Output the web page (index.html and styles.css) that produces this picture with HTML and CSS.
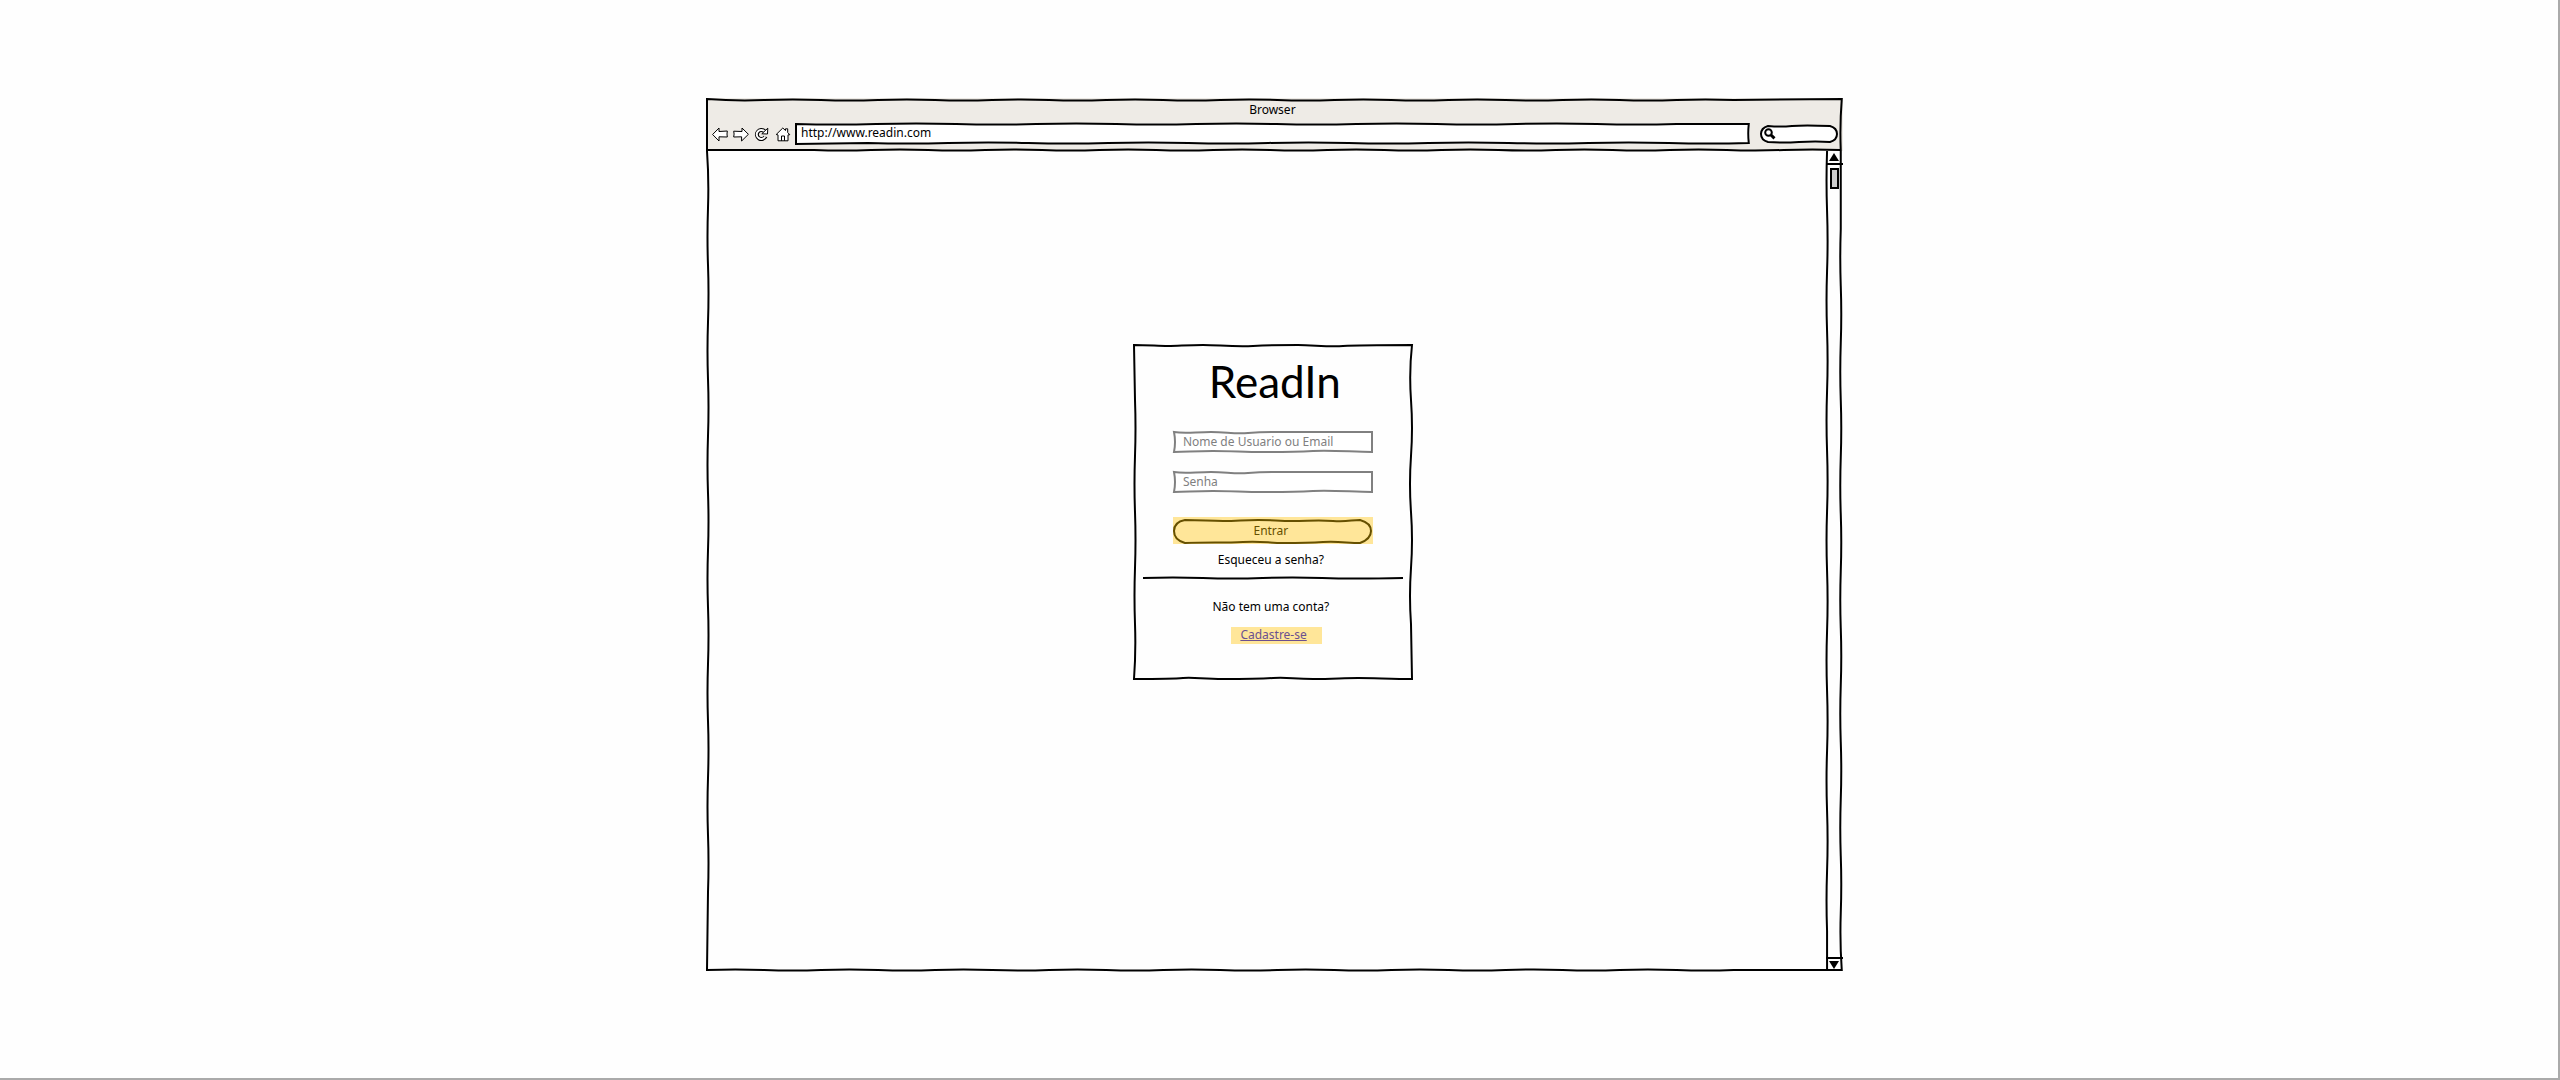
FILE: index.html
```html
<!DOCTYPE html>
<html lang="pt-BR">
<head>
<meta charset="utf-8">
<title>ReadIn</title>
<link rel="stylesheet" href="styles.css">
</head>
<body>
<main class="window">
  <header class="chrome">
    <div class="chrome-title">Browser</div>
    <div class="toolbar">
      <nav class="nav" aria-label="Browser">
        <button class="icon-btn" type="button" aria-label="Back"><svg width="16" height="16" viewBox="0 0 16 16"><path d="M.6 8.500 7 2V5.500L15.300 5Q14.700 8 15.300 11L7 10.800V15Z"/></svg></button>
        <button class="icon-btn" type="button" aria-label="Forward"><svg width="16" height="16" viewBox="0 0 16 16"><path d="M15.400 8.300 9 2V5.500L.7 5.200Q1.500 8 .7 11L8.600 10.800V15Z"/></svg></button>
        <button class="icon-btn" type="button" aria-label="Reload"><svg width="16" height="16" viewBox="0 0 16 16"><path class="arc-edge" d="M10.500 5.300A4.500 4.500 0 1 0 11.500 10.500"/><path class="arc-fill" d="M10.500 5.300A4.500 4.500 0 1 0 11.300 10.300"/><path d="M13.800 2.200 13.500 8 7.800 7.800Z"/></svg></button>
        <button class="icon-btn" type="button" aria-label="Home"><svg width="16" height="16" viewBox="0 0 16 16"><path d="M1.200 8.500 7.800 2 10.500 4.500V2.800H12.700V6.500L14.800 8.700 13 8.900V14.800H3V8.900ZM6.500 14.800V10H9.500V14.800"/></svg></button>
      </nav>
      <div class="field url">
        <input type="text" aria-label="URL" value="http://www.readin.com">
        <svg class="sketch" viewBox="0 0 954 20" preserveAspectRatio="none"><path d="M1 1q40 1 80 0t80 0t80 0t80 0t80 0t80 0t80 0t80 0t80 0t80 0t80 0L953 1Q952 10 953 19q-40 1-80 0t-80 0t-80 0t-80 0t-80 0t-80 0t-80 0t-80 0t-80 0t-80 0t-80 0L1 20Z"/></svg>
      </div>
      <label class="search">
        <svg class="lens" width="12" height="12" viewBox="0 0 12 12"><circle cx="4.500" cy="4.500" r="3.300"/><path d="M7 7 10.500 10.300" stroke-width="3"/></svg>
        <input type="search" aria-label="Search">
        <svg class="sketch" viewBox="0 0 78 18" preserveAspectRatio="none"><path d="M8 1Q20 2 32 1T70 1Q77 3 77 9T70 17Q56 16 39 17T8 17Q1 15 1 9T8 1Z"/></svg>
      </label>
    </div>
    <svg class="sketch" viewBox="0 0 1136 52" preserveAspectRatio="none"><path d="M1 1q28 2 57 1t57 0t57 0t57 0t57 0t57 0t57 0t57 0t57 0t57 0t57 0t57 0t57 0t57 0t57 0t57 0t57 0t57 0L1135 1Q1133 26 1134 51q-28-1-57 0t-57 0t-57 0t-57 0t-57 0t-57 0t-57 0t-57 0t-57 0t-57 0t-57 0t-57 0t-57 0t-57 0t-57 0t-57 0t-57 0t-57 0L1 51Z"/></svg>
  </header>

  <div class="view">
    <section class="page">
      <form class="card">
        <h1 class="brand">ReadIn</h1>
        <div class="field entry">
          <input type="text" aria-label="Nome de Usuario ou Email" placeholder="Nome de Usuario ou Email">
          <svg class="sketch" viewBox="0 0 200 22" preserveAspectRatio="none"><path d="M1 1C12 3 22 1 38 1S60 3 75 2S95 1 110 1L199 1V21C180 21 160 19 140 20S110 21 90 21S60 20 40 20S15 21 1 21Q3 11 1 1Z"/></svg>
        </div>
        <div class="field entry">
          <input type="password" aria-label="Senha" placeholder="Senha">
          <svg class="sketch" viewBox="0 0 200 22" preserveAspectRatio="none"><path d="M1 1C12 3 22 1 38 1S60 3 75 2S95 1 110 1L199 1V21C180 21 160 19 140 20S110 21 90 21S60 20 40 20S15 21 1 21Q3 11 1 1Z"/></svg>
        </div>
        <button class="submit" type="submit">Entrar
          <svg class="sketch" viewBox="0 0 200 27" preserveAspectRatio="none"><path d="M12 3C30 3 35 4 50 4S70 3 85 3S105 4 120 4S145 3 160 4S178 3 187 3Q198 6 198 14T187 26C175 26 165 24 150 25S125 26 110 26S90 24 70 25S35 25 12 26Q1 23 1 14T12 3Z"/></svg>
        </button>
        <a class="forgot" href="#">Esqueceu a senha?</a>
        <svg class="rule" viewBox="0 0 261 4" preserveAspectRatio="none"><path d="M0 2Q30 1 60 2T120 2T180 2T261 2"/></svg>
        <p class="ask">Não tem uma conta?</p>
        <a class="signup" href="#">Cadastre-se</a>
        <svg class="sketch" viewBox="0 0 280 336" preserveAspectRatio="none"><path d="M1 1C15 1 25 2 35 2S55 1 70 1S100 3 120 2S150 1 165 1S195 3 210 2S240 1 279 1Q276 28 278 56T278 112T278 168T278 224T278 280L279 335C260 335 240 334 225 334S200 335 180 335S155 333 140 334S110 335 90 335S60 333 50 334S20 335 1 335Q3 308 2 280T2 224T2 168T2 112T2 56L1 1Z"/></svg>
      </form>
    </section>
    <div class="scrollbar">
      <button class="step" type="button" aria-label="Up"><svg width="10" height="8" viewBox="0 0 10 8"><path d="M5 0 10 8H0Z"/></svg></button>
      <div class="track"><div class="thumb"></div></div>
      <button class="step down" type="button" aria-label="Down"><svg width="10" height="8" viewBox="0 0 10 8"><path d="M0 0H10L5 8Z"/></svg></button>
      <svg class="sketch" viewBox="0 0 16 820" preserveAspectRatio="none"><path d="M1 0q-1 30 0 60t0 60t0 60t0 60t0 60t0 60t0 60t0 60t0 60t0 60t0 60t0 60t0 60L1 820"/></svg>
    </div>
    <svg class="sketch" viewBox="0 0 1136 820" preserveAspectRatio="none"><path d="M1 0q2 28 1 57t0 57t0 57t0 57t0 57t0 57t0 57t0 57t0 57t0 57t0 57t0 57t0 57L1 819q28-1 57 0t57 0t57 0t57 0t57 0t57 0t57 0t57 0t57 0t57 0t57 0t57 0t57 0t57 0t57 0t57 0t57 0t57 0L1135 819q-2-28-1-57t0-57t0-57t0-57t0-57t0-57t0-57t0-57t0-57t0-57t0-57t0-57t0-57L1134 0"/></svg>
  </div>
</main>
</body>
</html>
```
FILE: styles.css
```css
* { box-sizing: border-box; }

body {
  margin: 0;
  min-height: 100vh;
  padding: 98px 0;
  background: #fefefe;
  border: solid #aaa;
  border-width: 0 2px 2px 0;
  color: #000;
  font: 12px/16px "Noto Sans", "Open Sans", sans-serif;
}

button, input { font: inherit; color: inherit; background: none; border: 0; padding: 0; margin: 0; min-width: 0; }
input { outline: 0; }
p, h1 { margin: 0; font-weight: 400; }

/* Hand-drawn outline laid over its parent box */
.sketch {
  position: absolute;
  inset: 0;
  width: 100%;
  height: 100%;
  overflow: visible;
  pointer-events: none;
}
.sketch path, .rule path { fill: none; stroke: #000; stroke-width: 2; vector-effect: non-scaling-stroke; }

.window {
  display: flex;
  flex-direction: column;
  width: 44.44%;
  min-width: 480px;
  min-height: calc(100vh - 207px);
  margin-left: 27.6%;
}

.chrome { position: relative; padding: 4px 5px 7px 6px; background: #eeebe6; }
.chrome-title { padding-right: 5px; text-align: center; }
.toolbar { display: flex; align-items: center; gap: 10px; padding-top: 5px; }
.nav { display: flex; gap: 5px; margin-right: -6px; }
.icon-btn { width: 16px; height: 16px; }
.icon-btn svg { display: block; fill: #fff; stroke: #000; stroke-width: 1; }
.icon-btn .arc-edge { fill: none; stroke-width: 4; }
.icon-btn .arc-fill { fill: none; stroke: #fff; stroke-width: 2; }
.field { position: relative; display: flex; background: #fff; }
.field input { width: 100%; }
.url { flex: 1; height: 21px; padding: 0 6px 2px; }
.search { position: relative; display: flex; align-items: center; width: 78px; height: 18px; padding: 0 4px; background: #fff; border-radius: 9px; }
.search input { width: 100%; }
.lens { flex: none; fill: #fff; stroke: #000; stroke-width: 2; }

.view { position: relative; flex: 1; display: flex; }
.page { flex: 1; display: flex; justify-content: center; align-items: flex-start; padding: 193px 0 193px 14px; }
.card { position: relative; display: flex; flex-direction: column; align-items: center; width: 280px; padding: 9px 10px 36px; }
.brand { margin-bottom: 4px; padding-left: 4px; font-family: Lato, "Noto Sans", sans-serif; font-size: 44px; line-height: 56px; }
.entry { width: 200px; height: 22px; margin-top: 18px; padding: 0 10px; color: #808080; }
.entry input::placeholder { color: #808080; opacity: 1; }
.entry .sketch path { stroke: #808080; }
.submit { position: relative; width: 200px; height: 27px; margin-top: 24px; padding-right: 4px; background: #ffe699; color: #665000; }
.submit .sketch path { stroke: #665000; }
.forgot { margin-top: 8px; color: #000; text-decoration: none; }
.rule { width: 100%; height: 4px; margin-top: 8px; }
.ask { margin-top: 19px; }
.signup { width: 91px; margin: 12px 0 0 8px; padding: 0 0 1px 9px; background: #ffe699; color: #6b5090; }
.forgot, .ask { padding-right: 4px; }

.scrollbar { position: relative; display: flex; flex-direction: column; width: 17px; }
.step { display: flex; align-items: center; justify-content: center; height: 14px; border-bottom: 2px solid #000; }
.step.down { border-top: 2px solid #000; border-bottom: 0; }
.track { flex: 1; padding: 3px 4px; }
.thumb { width: 9px; height: 21px; background: #ccc; border: 2px solid #000; }
```
